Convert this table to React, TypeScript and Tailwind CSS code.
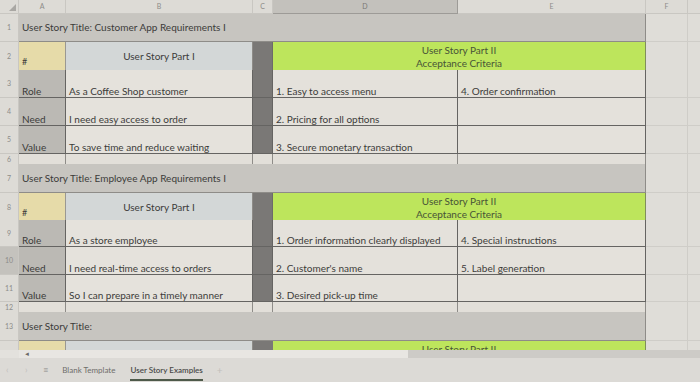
import React from "react";

const COLS = "grid grid-cols-[19px_47px_187px_20px_185px_188px_42px_12px]";
const FONT = { fontFamily: "Lato, 'Liberation Sans', sans-serif" };

function RowNum({ n, hi }: { n: string; hi?: boolean }) {
  return (
    <div
      className={`flex items-center justify-center border-r border-b border-[#c9c7c2] text-[7px] text-[#8d8c89] ${
        hi ? "bg-[#c4c2bd]" : "bg-[#dddbd6]"
      }`}
    >
      {n}
    </div>
  );
}

function Grid() {
  return (
    <>
      <div className="border-r border-b border-[#cfcdc8] bg-[#dfddd8]" />
      <div className="border-b border-[#cfcdc8] bg-[#dfddd8]" />
    </>
  );
}

function TitleRow({ n, text, h }: { n: string; text: string; h: string }) {
  return (
    <div className={`${COLS} ${h}`}>
      <RowNum n={n} />
      <div className="col-span-5 flex items-center border-r border-b border-[#8e8c88] bg-[#c7c5c0] pl-[3px] text-[10px] text-[#3c3c3a]">
        {text}
      </div>
      <Grid />
    </div>
  );
}

function HeaderRow({ n, h }: { n: string; h: string }) {
  return (
    <div className={`${COLS} ${h}`}>
      <RowNum n={n} />
      <div className="flex items-end border-r border-b border-[#9a9892] bg-[#e6dba9] pb-[2px] pl-[3px] text-[9px] text-[#3c3c3a]">
        #
      </div>
      <div className="flex items-start justify-center border-r border-b border-[#8e8c88] bg-[#d3d7d7] pt-[7px] text-[10px] text-[#3c3c3a]">
        User Story Part I
      </div>
      <div className="border-r border-b border-[#6d6b69] bg-[#7a7876]" />
      <div className="col-span-2 flex flex-col items-center justify-start border-r border-b border-[#7f8f5a] bg-[#bde55c] pt-[2px] text-[10px] leading-[13px] text-[#485437]">
        <span>User Story Part II</span>
        <span>Acceptance Criteria</span>
      </div>
      <Grid />
    </div>
  );
}

function DataRow({
  n,
  h,
  a,
  b,
  d,
  e,
  hi,
}: {
  n: string;
  h: string;
  a: string;
  b: string;
  d: string;
  e: string;
  hi?: boolean;
}) {
  return (
    <div className={`${COLS} ${h}`}>
      <RowNum n={n} hi={hi} />
      <div className="flex items-end border-r border-b border-[#656462] bg-[#bbb9b4] pl-[3px] text-[10px] leading-[12px] text-[#3c3c3a]">
        {a}
      </div>
      <div className="flex items-end border-r border-b border-[#656462] bg-[#e5e2dc] pl-[3px] text-[10px] leading-[12px] text-[#3c3c3a] whitespace-nowrap">
        {b}
      </div>
      <div className="border-r border-b border-[#656462] bg-[#7a7876]" />
      <div className="flex items-end border-r border-b border-[#656462] bg-[#e4e1db] pl-[3px] text-[10px] leading-[12px] text-[#3c3c3a] whitespace-nowrap">
        {d}
      </div>
      <div className="flex items-end border-r border-b border-[#656462] bg-[#e4e1db] pl-[3px] text-[10px] leading-[12px] text-[#3c3c3a] whitespace-nowrap">
        {e}
      </div>
      <Grid />
    </div>
  );
}

function SpacerRow({ n, h }: { n: string; h: string }) {
  return (
    <div className={`${COLS} ${h}`}>
      <RowNum n={n} />
      <div className="border-r border-b border-[#8e8c88] bg-[#e2dfd9]" />
      <div className="border-r border-b border-[#8e8c88] bg-[#e2dfd9]" />
      <div className="border-r border-b border-[#8e8c88] bg-[#e2dfd9]" />
      <div className="border-r border-b border-[#8e8c88] bg-[#e2dfd9]" />
      <div className="border-r border-b border-[#8e8c88] bg-[#e2dfd9]" />
      <Grid />
    </div>
  );
}

export default function App() {
  return (
    <div className="h-[382px] w-[700px] overflow-hidden bg-[#dfddd8] select-none" style={FONT}>
      {/* column headers */}
      <div className={`${COLS} h-[14px] text-[7px] text-[#8d8c89]`}>
        <div className="relative border-r border-b border-[#c9c7c2] bg-[#dddbd6]">
          <svg className="absolute bottom-[2px] right-[2px]" width="7" height="7" viewBox="0 0 7 7">
            <polygon points="7,0 7,7 0,7" fill="#a9a7a3" />
          </svg>
        </div>
        <div className="flex items-center justify-center border-r border-b border-[#c9c7c2] bg-[#dddbd6]">A</div>
        <div className="flex items-center justify-center border-r border-b border-[#c9c7c2] bg-[#dddbd6]">B</div>
        <div className="flex items-center justify-center border-r border-b border-[#c9c7c2] bg-[#dddbd6]">C</div>
        <div className="flex items-center justify-center border-r border-b border-[#9d9b97] bg-[#c3c1bc] text-[#7a7976]">D</div>
        <div className="flex items-center justify-center border-r border-b border-[#c9c7c2] bg-[#dddbd6]">E</div>
        <div className="flex items-center justify-center border-r border-b border-[#c9c7c2] bg-[#dddbd6]">F</div>
        <div className="border-b border-[#c9c7c2] bg-[#dddbd6]" />
      </div>

      <TitleRow n="1" h="h-[28px]" text="User Story Title: Customer App Requirements I" />
      <HeaderRow n="2" h="h-[28px]" />
      <DataRow n="3" h="h-[28px]" a="Role" b="As a Coffee Shop customer" d="1. Easy to access menu" e="4. Order confirmation" />
      <DataRow n="4" h="h-[28px]" a="Need" b="I need easy access to order" d="2. Pricing for all options" e="" />
      <DataRow n="5" h="h-[28px]" a="Value" b="To save time and reduce waiting" d="3. Secure monetary transaction" e="" />
      <SpacerRow n="6" h="h-[10px]" />
      <TitleRow n="7" h="h-[29px]" text="User Story Title: Employee App Requirements I" />
      <HeaderRow n="8" h="h-[27px]" />
      <DataRow n="9" h="h-[27px]" a="Role" b="As a store employee" d="1. Order information clearly displayed" e="4. Special instructions" />
      <DataRow n="10" h="h-[28px]" hi a="Need" b="I need real-time access to orders" d="2. Customer's name" e="5. Label generation" />
      <DataRow n="11" h="h-[27px]" a="Value" b="So I can prepare in a timely manner" d="3. Desired pick-up time" e="" />
      <SpacerRow n="12" h="h-[10px]" />
      <TitleRow n="13" h="h-[29px]" text="User Story Title:" />

      {/* partial row 14 */}
      <div className={`${COLS} h-[9px]`}>
        <div className="border-r border-[#c9c7c2] bg-[#dddbd6]" />
        <div className="border-r border-[#9a9892] bg-[#e6dba9]" />
        <div className="border-r border-[#8e8c88] bg-[#d3d7d7]" />
        <div className="bg-[#7a7876]" />
        <div className="col-span-2 flex justify-center overflow-hidden border-r border-[#7f8f5a] bg-[#bde55c] pt-[2px] text-[10px] leading-[13px] text-[#485437]">
          <span>User Story Part II</span>
        </div>
        <div className="border-r border-[#cfcdc8] bg-[#dfddd8]" />
        <div className="bg-[#dfddd8]" />
      </div>

      {/* horizontal scroll strip */}
      <div className="flex h-[8px]">
        <div className="w-[19px] bg-[#e3e1dd]" />
        <div className="flex w-[389px] items-center bg-[#e8e6e2] pl-[5px] text-[6px] leading-none text-[#6a6966]">
          ◄
        </div>
        <div className="flex-1 bg-[#cdcbc7]" />
      </div>

      {/* sheet tabs */}
      <div className="flex h-[24px] items-center bg-[#dcdad6] text-[8px] text-[#7c7b78]">
        <span className="ml-[6px] w-[14px] text-[9px] text-[#c2c0bc]">‹</span>
        <span className="ml-[5px] w-[14px] text-[9px] text-[#c2c0bc]">›</span>
        <span className="ml-[4px] text-[9px] text-[#8a8986]">≡</span>
        <span className="ml-[14px] text-[#6e6d6a]">Blank Template</span>
        <span className="relative ml-[15px] font-semibold text-[#4a4a48]">
          User Story Examples
          <span className="absolute -bottom-[5px] left-0 right-0 h-[2px] bg-[#4e5a4a]" />
        </span>
        <span className="ml-[14px] text-[10px] text-[#c2c0bc]">+</span>
      </div>
    </div>
  );
}
